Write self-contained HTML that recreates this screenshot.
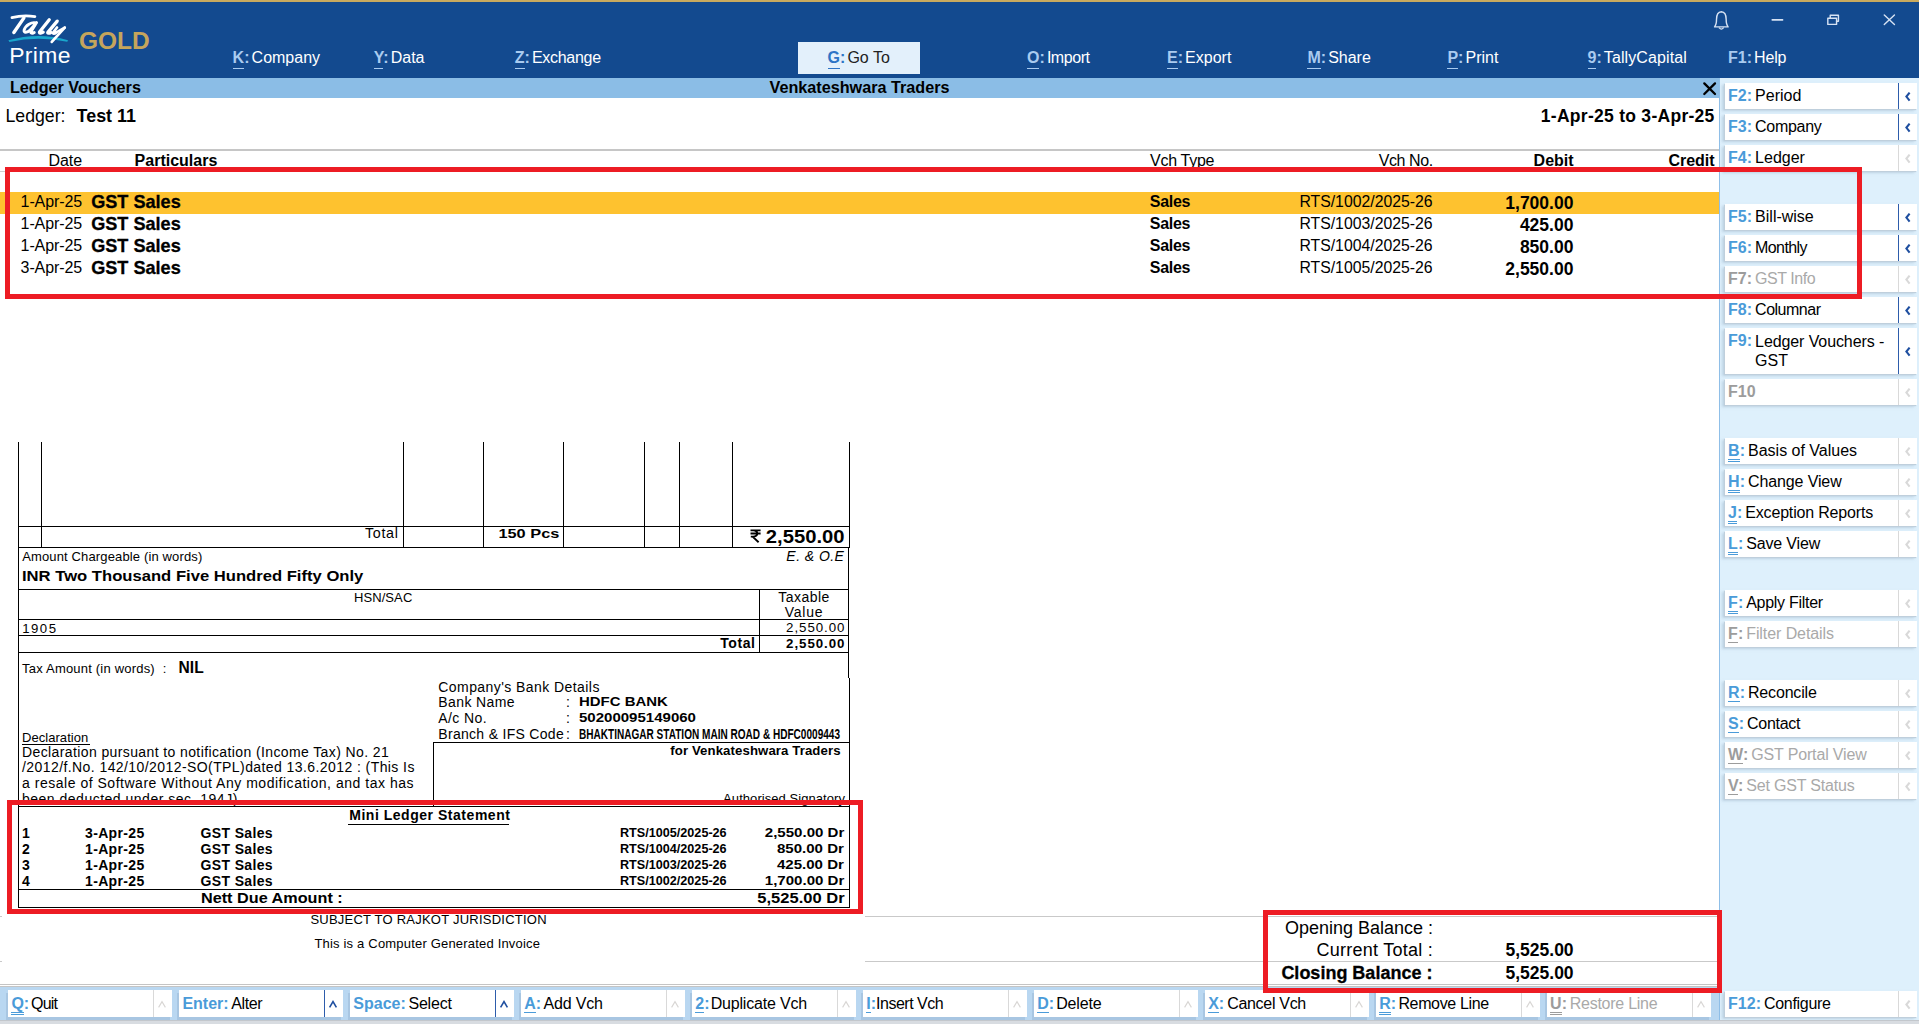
<!DOCTYPE html>
<html><head><meta charset="utf-8"><title>TallyPrime</title>
<style>
*{box-sizing:border-box;margin:0;padding:0}
html,body{width:1919px;height:1024px;overflow:hidden;background:#fff}
body{position:relative;font-family:"Liberation Sans",sans-serif;font-size:16px;color:#000}
.a{position:absolute;white-space:nowrap}
.b{font-weight:bold}
.hdr{left:0;top:0;width:1919px;height:78px;background:#134a8f}
.gold{left:0;top:0;width:1919px;height:2px;background:#c9aa5e}
.mi{color:#fff;font-size:16px;line-height:20px}
.mi .k{color:#a9cbf0;font-weight:bold;border-bottom:1px solid #a9cbf0;padding-bottom:2px}
.mi .c{color:#a9cbf0;font-weight:bold;margin-right:2.1px}
.tb{left:0;top:78px;width:1720px;height:20px;background:#8bbde6}
.side{left:1719px;top:78px;width:200px;height:946px;background:#def0fc;border-left:1px solid #8fbfe8}
.btn{left:1725px;width:192px;height:26px;background:#fff;box-shadow:-1px 1px 1px #bfcfdc,-3px 2px 2.5px rgba(160,186,208,.5);font-size:16px;line-height:24.6px}
.btn .k{position:absolute;left:3.1px;top:1px;color:#4a9bd9;font-weight:bold}
.btn .l{position:absolute;top:1px;color:#000}
.btn .sep{position:absolute;left:173px;top:0;width:1px;height:26px;background:#2d5cab}
.btn .ch{position:absolute;left:178px;top:0;width:10px;height:26px}
.btn.dis .k{color:#9c9c9c}
.btn.dis .l{color:#a9a9a9}
.btn.na .sep{background:#d9d9d9}
.u1{border-bottom:1px solid currentColor;padding-bottom:0}
.u2{border-bottom:3px double currentColor;padding-bottom:0}
.bb{left:0;top:987px;width:1719px;height:33px;background:#b9d7f1}
.bbtn{top:990px;width:164px;height:27px;background:#fff;font-size:16px;line-height:27.4px;box-shadow:-2px 3px 0 #a8c6e2}
.bbtn .k{position:absolute;left:3.4px;top:0;color:#4a9bd9;font-weight:bold}
.bbtn .l{position:absolute;top:0;color:#000;letter-spacing:-0.27px}
.bbtn .sep{position:absolute;left:145.4px;top:0;width:1px;height:27px;background:#d9d9d9}
.bbtn.act .sep{background:#2d5cab}
.bbtn.dis .k{color:#9c9c9c}.bbtn.dis .l{color:#a9a9a9}
.gl{background:#c6c6c6;height:2px}
.red{border:5px solid #ed1c24}
.ln{background:#000}
.inv{font-size:13px}
</style></head><body>

<div class="a hdr"></div><div class="a gold"></div>
<svg class="a" style="left:4px;top:10px" width="80" height="60" viewBox="0 0 1365 1024">
<path d="M75,518 Q580,372 1092,516 L1080,542 Q580,438 92,545 Z" fill="#19a6cc"/>
<g fill="none" stroke="#fff" stroke-linecap="round" stroke-linejoin="round">
<path d="M135,130 C250,100 400,92 528,112" stroke-width="46"/>
<path d="M340,135 L168,385" stroke-width="58"/>
<path d="M552,222 C470,196 366,262 344,340 C330,392 396,396 446,342 C490,296 530,246 556,214 L462,368 C446,396 484,404 516,384" stroke-width="50"/>
<path d="M772,168 L606,376 C596,398 636,402 668,380" stroke-width="56"/>
<path d="M908,190 L748,382 C738,398 768,402 800,384" stroke-width="56"/>
<path d="M905,298 L838,386 C828,408 858,412 896,382 L1036,300" stroke-width="46"/>
<path d="M1036,300 L815,545" stroke-width="46"/>
</g>
</svg>
<div class="a" style="left:9.2px;top:41.77px;font-size:22.9px;line-height:26px;color:#fff;letter-spacing:0.35px">Prime</div>
<div class="a b" style="left:79px;top:27.21px;font-size:24.5px;line-height:28px;color:#c5a55c;">GOLD</div>
<div class="a mi" style="left:232.6px;top:48.06px"><span class="k">K</span><span class="c">:</span>Company</div>
<div class="a mi" style="left:373.8px;top:48.06px"><span class="k">Y</span><span class="c">:</span>Data</div>
<div class="a mi" style="left:514.8px;top:48.06px"><span class="k">Z</span><span class="c">:</span><span style="letter-spacing:-0.3px">Exchange</span></div>
<div class="a" style="left:798px;top:42px;width:122px;height:32px;background:#e3f0fb"></div>
<div class="a mi" style="left:827.5px;top:48.06px;color:#222"><span class="k" style="color:#2e74c6;border-color:#2e74c6">G</span><span class="c" style="color:#2e74c6">:</span>Go To</div>
<div class="a mi" style="left:1027.0px;top:48.06px"><span class="k">O</span><span class="c">:</span><span style="letter-spacing:-0.45px">Import</span></div>
<div class="a mi" style="left:1167.0px;top:48.06px"><span class="k">E</span><span class="c">:</span>Export</div>
<div class="a mi" style="left:1307.4px;top:48.06px"><span class="k">M</span><span class="c">:</span>Share</div>
<div class="a mi" style="left:1447.4px;top:48.06px"><span class="k">P</span><span class="c">:</span>Print</div>
<div class="a mi" style="left:1587.5px;top:48.06px"><span class="k">9</span><span class="c">:</span><span style="letter-spacing:0.1px">TallyCapital</span></div>
<div class="a mi" style="left:1728.0px;top:48.06px"><span class="k" style="border-bottom:none">F1</span><span class="c">:</span><span style="letter-spacing:-0.2px">Help</span></div>
<svg class="a" style="left:1700px;top:4px" width="210" height="32" viewBox="0 0 1919 292" fill="none" stroke="#d6e2f3" stroke-width="13" stroke-linecap="round" stroke-linejoin="round">
<path d="M195,70 C160,72 151,105 151,140 C151,178 146,194 133,209 L257,209 C244,194 239,178 239,140 C239,105 230,72 195,70 Z"/>
<path d="M176,218 Q195,240 214,218" stroke-width="12"/>
<path d="M660,145 L755,145" stroke-width="14"/>
<path d="M1190,128 L1190,102 L1265,102 L1265,158 L1248,158"/>
<rect x="1168" y="130" width="80" height="56"/>
<path d="M1684,100 L1777,188 M1777,100 L1684,188" stroke-width="13"/>
</svg>
<div class="a tb"></div>
<div class="a b" style="left:9.9px;top:76.99px;line-height:20px;font-size:16.2px">Ledger Vouchers</div>
<div class="a b" style="left:0;width:1719px;text-align:center;top:76.99px;line-height:20px;font-size:16.2px">Venkateshwara Traders</div>
<svg class="a" style="left:1702px;top:81px" width="16" height="16" viewBox="0 0 16 16"><path d="M2.3,2.4 L13,13 M13,2.4 L2.3,13" stroke="#000" stroke-width="2.3" stroke-linecap="round" fill="none"/></svg>
<div class="a" style="left:5.5px;top:104.77px;font-size:17.7px;line-height:22px">Ledger:</div>
<div class="a b" style="left:76.6px;top:104.77px;font-size:17.9px;line-height:22px">Test 11</div>
<div class="a b" style="right:204.4px;top:104.84px;font-size:17.5px;letter-spacing:0.28px;line-height:22px">1-Apr-25 to 3-Apr-25</div>
<div class="a gl" style="left:0;top:149px;width:1719px"></div>
<div class="a" style="left:48.4px;top:150.66px;line-height:20px">Date</div>
<div class="a b" style="left:134.6px;top:150.66px;line-height:20px">Particulars</div>
<div class="a" style="left:1150.1px;top:150.66px;line-height:20px;letter-spacing:-0.3px">Vch Type</div>
<div class="a" style="right:486.2px;top:150.66px;line-height:20px;letter-spacing:-0.4px">Vch No.</div>
<div class="a b" style="right:345.4px;top:150.66px;line-height:20px">Debit</div>
<div class="a b" style="right:204.4px;top:150.66px;line-height:20px">Credit</div>
<div class="a" style="left:0;top:171px;width:1719px;height:1px;background:#cfcfcf"></div>
<div class="a" style="left:0;top:192px;width:1719px;height:21.7px;background:#fec22f"></div>
<div class="a" style="left:20.6px;top:191.76px;line-height:20px;letter-spacing:-0.1px">1-Apr-25</div>
<div class="a b" style="left:91.2px;top:191.43px;font-size:18.1px;line-height:22px;-webkit-text-stroke:0.3px #000">GST Sales</div>
<div class="a b" style="left:1149.8px;top:191.76px;line-height:20px;letter-spacing:-0.3px">Sales</div>
<div class="a" style="right:486.4px;top:191.76px;line-height:20px;font-size:15.8px">RTS/1002/2025-26</div>
<div class="a b" style="right:345.6px;top:191.64px;font-size:17.5px;line-height:22px">1,700.00</div>
<div class="a" style="left:20.6px;top:213.76px;line-height:20px;letter-spacing:-0.1px">1-Apr-25</div>
<div class="a b" style="left:91.2px;top:213.43px;font-size:18.1px;line-height:22px;-webkit-text-stroke:0.3px #000">GST Sales</div>
<div class="a b" style="left:1149.8px;top:213.76px;line-height:20px;letter-spacing:-0.3px">Sales</div>
<div class="a" style="right:486.4px;top:213.76px;line-height:20px;font-size:15.8px">RTS/1003/2025-26</div>
<div class="a b" style="right:345.6px;top:213.64px;font-size:17.5px;line-height:22px">425.00</div>
<div class="a" style="left:20.6px;top:235.76px;line-height:20px;letter-spacing:-0.1px">1-Apr-25</div>
<div class="a b" style="left:91.2px;top:235.43px;font-size:18.1px;line-height:22px;-webkit-text-stroke:0.3px #000">GST Sales</div>
<div class="a b" style="left:1149.8px;top:235.76px;line-height:20px;letter-spacing:-0.3px">Sales</div>
<div class="a" style="right:486.4px;top:235.76px;line-height:20px;font-size:15.8px">RTS/1004/2025-26</div>
<div class="a b" style="right:345.6px;top:235.64px;font-size:17.5px;line-height:22px">850.00</div>
<div class="a" style="left:20.6px;top:257.76px;line-height:20px;letter-spacing:-0.1px">3-Apr-25</div>
<div class="a b" style="left:91.2px;top:257.43px;font-size:18.1px;line-height:22px;-webkit-text-stroke:0.3px #000">GST Sales</div>
<div class="a b" style="left:1149.8px;top:257.76px;line-height:20px;letter-spacing:-0.3px">Sales</div>
<div class="a" style="right:486.4px;top:257.76px;line-height:20px;font-size:15.8px">RTS/1005/2025-26</div>
<div class="a b" style="right:345.6px;top:257.64px;font-size:17.5px;line-height:22px">2,550.00</div>
<div class="a" style="left:0;top:916px;width:1719px;height:1px;background:#c9c9c9"></div>
<div class="a" style="left:0;top:961px;width:1719px;height:1px;background:#c9c9c9"></div>
<div class="a" style="left:0;top:984px;width:1719px;height:1px;background:#c4c4c4"></div><div class="a" style="left:0;top:986px;width:1719px;height:1px;background:#c4c4c4"></div>
<div class="a" style="right:486.0px;top:917.06px;font-size:18px;line-height:22px">Opening Balance :</div>
<div class="a" style="right:486.0px;top:938.96px;font-size:18px;line-height:22px;letter-spacing:0.25px">Current Total :</div>
<div class="a b" style="right:486.6px;top:962.16px;font-size:18px;line-height:22px;-webkit-text-stroke:0.3px #000">Closing Balance :</div>
<div class="a b" style="right:345.4px;top:938.94px;font-size:17.5px;line-height:22px">5,525.00</div>
<div class="a b" style="right:345.4px;top:961.94px;font-size:17.5px;line-height:22px">5,525.00</div>
<div class="a" style="left:2px;top:436px;width:863px;height:548px;background:#fff"></div>
<div class="a ln" style="left:18px;top:442px;width:1px;height:105px"></div>
<div class="a ln" style="left:41px;top:442px;width:1px;height:105px"></div>
<div class="a ln" style="left:403px;top:442px;width:1px;height:105px"></div>
<div class="a ln" style="left:483px;top:442px;width:1px;height:105px"></div>
<div class="a ln" style="left:563px;top:442px;width:1px;height:105px"></div>
<div class="a ln" style="left:644px;top:442px;width:1px;height:105px"></div>
<div class="a ln" style="left:679px;top:442px;width:1px;height:105px"></div>
<div class="a ln" style="left:732px;top:442px;width:1px;height:105px"></div>
<div class="a ln" style="left:849px;top:442px;width:1px;height:105px"></div>
<div class="a ln" style="left:18px;top:547px;width:1px;height:361px"></div>
<div class="a ln" style="left:848px;top:547px;width:1px;height:131px"></div>
<div class="a ln" style="left:849px;top:678px;width:1px;height:230px"></div>
<div class="a ln" style="left:18px;top:526px;width:832px;height:1px"></div>
<div class="a ln" style="left:18px;top:547px;width:832px;height:1px"></div>
<div class="a ln" style="left:18px;top:589px;width:831px;height:1px"></div>
<div class="a ln" style="left:18px;top:619px;width:831px;height:1px"></div>
<div class="a ln" style="left:18px;top:635px;width:831px;height:1px"></div>
<div class="a ln" style="left:18px;top:652px;width:831px;height:1px"></div>
<div class="a ln" style="left:759px;top:589px;width:1px;height:63px"></div>
<div class="a ln" style="left:433px;top:742px;width:1px;height:64px"></div>
<div class="a ln" style="left:433px;top:742px;width:416px;height:1px"></div>
<div class="a ln" style="left:18px;top:806px;width:832px;height:1px"></div>
<div class="a ln" style="left:18px;top:889px;width:832px;height:1px"></div>
<div class="a ln" style="left:18px;top:907px;width:832px;height:1px"></div>
<div class="a" style="top:524.35px;font-size:14.3px;line-height:19px;right:1520.4px;letter-spacing:0.7px;">Total</div>
<div class="a" style="top:525.12px;font-size:13.5px;line-height:18px;right:1359.4px;font-weight:bold;transform:scaleX(1.21);transform-origin:right center;">150 Pcs</div>
<svg class="a" style="left:749.6px;top:529px" width="12" height="14" viewBox="0 0 12 14"><path d="M0.5,1.4 H10.6 M0.5,4.5 H10.6 M2.6,1.4 C8.9,0.9 8.9,7.9 2.6,7.6 H0.8 M2.6,7.6 L8.6,13.3" fill="none" stroke="#000" stroke-width="1.9"/></svg>
<div class="a" style="top:525.02px;font-size:18.4px;line-height:24px;right:1074.0px;font-weight:bold;transform:scaleX(1.1);transform-origin:right center;">2,550.00</div>
<div class="a" style="top:547.80px;font-size:13px;line-height:17px;left:22.2px;letter-spacing:0.14px;">Amount Chargeable (in words)</div>
<div class="a" style="top:546.75px;font-size:14px;line-height:18px;right:1074.6px;font-style:italic;letter-spacing:0.45px;">E. &amp; O.E</div>
<div class="a" style="top:567.01px;font-size:14.4px;line-height:19px;left:21.8px;font-weight:bold;transform:scaleX(1.155);transform-origin:left center;">INR Two Thousand Five Hundred Fifty Only</div>
<div class="a" style="top:588.80px;font-size:13px;line-height:17px;left:353.9px;letter-spacing:0.1px;">HSN/SAC</div>
<div class="a" style="top:587.55px;font-size:14px;line-height:18px;left:759.0px;letter-spacing:0.45px;width:90px;text-align:center;">Taxable</div>
<div class="a" style="top:602.75px;font-size:14px;line-height:18px;left:759.0px;letter-spacing:0.75px;width:90px;text-align:center;">Value</div>
<div class="a" style="top:619.53px;font-size:13.2px;line-height:17px;left:22.2px;letter-spacing:1.5px;">1905</div>
<div class="a" style="top:619.49px;font-size:13.3px;line-height:17px;right:1073.6px;letter-spacing:0.95px;">2,550.00</div>
<div class="a" style="top:634.05px;font-size:14px;line-height:18px;right:1163.4px;font-weight:bold;letter-spacing:0.6px;">Total</div>
<div class="a" style="top:634.79px;font-size:13.3px;line-height:17px;right:1073.6px;font-weight:bold;letter-spacing:0.95px;">2,550.00</div>
<div class="a" style="top:660.00px;font-size:13px;line-height:17px;left:22.1px;letter-spacing:0.2px;">Tax Amount (in words)</div>
<div class="a" style="top:660.00px;font-size:13px;line-height:17px;left:162.8px;">:</div>
<div class="a" style="top:657.79px;font-size:15.6px;line-height:20px;left:178.6px;font-weight:bold;">NIL</div>
<div class="a" style="top:677.95px;font-size:14px;line-height:18px;left:438.3px;letter-spacing:0.43px;">Company's Bank Details</div>
<div class="a" style="top:692.85px;font-size:14px;line-height:18px;left:438.3px;letter-spacing:0.4px;">Bank Name</div>
<div class="a" style="top:692.85px;font-size:14px;line-height:18px;left:566.0px;">:</div>
<div class="a" style="top:692.99px;font-size:13.6px;line-height:18px;left:578.6px;font-weight:bold;transform:scaleX(1.1);transform-origin:left center;">HDFC BANK</div>
<div class="a" style="top:708.95px;font-size:14px;line-height:18px;left:438.3px;letter-spacing:0.4px;">A/c No.</div>
<div class="a" style="top:708.95px;font-size:14px;line-height:18px;left:566.0px;">:</div>
<div class="a" style="top:709.09px;font-size:13.6px;line-height:18px;left:578.6px;font-weight:bold;transform:scaleX(1.105);transform-origin:left center;">50200095149060</div>
<div class="a" style="top:725.05px;font-size:14px;line-height:18px;left:438.3px;letter-spacing:0.3px;">Branch &amp; IFS Code</div>
<div class="a" style="top:725.05px;font-size:14px;line-height:18px;left:566.0px;">:</div>
<div class="a" style="top:725.05px;font-size:14px;line-height:18px;left:578.6px;font-weight:bold;transform:scaleX(0.718);transform-origin:left center;">BHAKTINAGAR STATION MAIN ROAD &amp; HDFC0009443</div>
<div class="a" style="top:741.53px;font-size:13.2px;line-height:17px;right:1078.4px;font-weight:bold;letter-spacing:0.1px;">for Venkateshwara Traders</div>
<div class="a" style="top:790.30px;font-size:13px;line-height:17px;right:1074.0px;letter-spacing:0.06px;">Authorised Signatory</div>
<div class="a" style="top:728.50px;font-size:13px;line-height:17px;left:22.0px;letter-spacing:0.05px;">Declaration</div>
<div class="a ln" style="left:22px;top:744px;width:67.5px;height:1px"></div>
<div class="a" style="top:742.75px;font-size:14px;line-height:18px;left:22.0px;letter-spacing:0.39px;">Declaration pursuant to notification (Income Tax) No. 21</div>
<div class="a" style="top:758.40px;font-size:14px;line-height:18px;left:22.0px;letter-spacing:0.42px;">/2012/f.No. 142/10/2012-SO(TPL)dated 13.6.2012 : (This Is</div>
<div class="a" style="top:774.05px;font-size:14px;line-height:18px;left:22.0px;letter-spacing:0.52px;">a resale of Software Without Any modification, and tax has</div>
<div class="a" style="top:789.70px;font-size:14px;line-height:18px;left:22.0px;letter-spacing:0.5px;">been deducted under sec. 194J)</div>
<div class="a" style="top:806.15px;font-size:14px;line-height:18px;left:349.2px;font-weight:bold;letter-spacing:0.53px;">Mini Ledger Statement</div>
<div class="a ln" style="left:348px;top:824px;width:160.8px;height:1px"></div>
<div class="a" style="top:823.85px;font-size:14px;line-height:18px;left:22.0px;font-weight:bold;">1</div>
<div class="a" style="top:823.85px;font-size:14px;line-height:18px;left:85.0px;font-weight:bold;letter-spacing:0.35px;">3-Apr-25</div>
<div class="a" style="top:823.85px;font-size:14px;line-height:18px;left:200.6px;font-weight:bold;letter-spacing:0.35px;">GST Sales</div>
<div class="a" style="top:823.95px;font-size:13.7px;line-height:18px;left:620.0px;font-weight:bold;transform:scaleX(0.922);transform-origin:left center;">RTS/1005/2025-26</div>
<div class="a" style="top:823.95px;font-size:13.7px;line-height:18px;right:1074.8px;font-weight:bold;transform:scaleX(1.1);transform-origin:right center;">2,550.00 Dr</div>
<div class="a" style="top:839.85px;font-size:14px;line-height:18px;left:22.0px;font-weight:bold;">2</div>
<div class="a" style="top:839.85px;font-size:14px;line-height:18px;left:85.0px;font-weight:bold;letter-spacing:0.35px;">1-Apr-25</div>
<div class="a" style="top:839.85px;font-size:14px;line-height:18px;left:200.6px;font-weight:bold;letter-spacing:0.35px;">GST Sales</div>
<div class="a" style="top:839.95px;font-size:13.7px;line-height:18px;left:620.0px;font-weight:bold;transform:scaleX(0.922);transform-origin:left center;">RTS/1004/2025-26</div>
<div class="a" style="top:839.95px;font-size:13.7px;line-height:18px;right:1074.8px;font-weight:bold;transform:scaleX(1.1);transform-origin:right center;">850.00 Dr</div>
<div class="a" style="top:855.85px;font-size:14px;line-height:18px;left:22.0px;font-weight:bold;">3</div>
<div class="a" style="top:855.85px;font-size:14px;line-height:18px;left:85.0px;font-weight:bold;letter-spacing:0.35px;">1-Apr-25</div>
<div class="a" style="top:855.85px;font-size:14px;line-height:18px;left:200.6px;font-weight:bold;letter-spacing:0.35px;">GST Sales</div>
<div class="a" style="top:855.95px;font-size:13.7px;line-height:18px;left:620.0px;font-weight:bold;transform:scaleX(0.922);transform-origin:left center;">RTS/1003/2025-26</div>
<div class="a" style="top:855.95px;font-size:13.7px;line-height:18px;right:1074.8px;font-weight:bold;transform:scaleX(1.1);transform-origin:right center;">425.00 Dr</div>
<div class="a" style="top:871.85px;font-size:14px;line-height:18px;left:22.0px;font-weight:bold;">4</div>
<div class="a" style="top:871.85px;font-size:14px;line-height:18px;left:85.0px;font-weight:bold;letter-spacing:0.35px;">1-Apr-25</div>
<div class="a" style="top:871.85px;font-size:14px;line-height:18px;left:200.6px;font-weight:bold;letter-spacing:0.35px;">GST Sales</div>
<div class="a" style="top:871.95px;font-size:13.7px;line-height:18px;left:620.0px;font-weight:bold;transform:scaleX(0.922);transform-origin:left center;">RTS/1002/2025-26</div>
<div class="a" style="top:871.95px;font-size:13.7px;line-height:18px;right:1074.8px;font-weight:bold;transform:scaleX(1.1);transform-origin:right center;">1,700.00 Dr</div>
<div class="a" style="top:888.68px;font-size:14.5px;line-height:19px;left:201.4px;font-weight:bold;transform:scaleX(1.118);transform-origin:left center;">Nett Due Amount :</div>
<div class="a" style="top:888.88px;font-size:14.5px;line-height:19px;right:1074.0px;font-weight:bold;transform:scaleX(1.14);transform-origin:right center;">5,525.00 Dr</div>
<div class="a" style="top:910.50px;font-size:13px;line-height:17px;left:310.4px;letter-spacing:0.23px;">SUBJECT TO RAJKOT JURISDICTION</div>
<div class="a" style="top:934.50px;font-size:13px;line-height:17px;left:314.4px;letter-spacing:0.19px;">This is a Computer Generated Invoice</div>
<div class="a side"></div>
<div class="a btn" style="top:83px;height:26px"><span class="k">F2:</span><span class="l" style="left:30.1px;">Period</span><span class="sep" style="height:26px"></span><svg class="ch" style="top:0px" viewBox="0 0 10 26"><path d="M6.6,9.6 L3.4,13.6 L6.6,17.6" fill="none" stroke="#1f4fa0" stroke-width="2.1" stroke-linecap="butt"/></svg></div>
<div class="a btn" style="top:114px;height:26px"><span class="k">F3:</span><span class="l" style="left:30.1px;"><span style="letter-spacing:-0.3px">Company</span></span><span class="sep" style="height:26px"></span><svg class="ch" style="top:0px" viewBox="0 0 10 26"><path d="M6.6,9.6 L3.4,13.6 L6.6,17.6" fill="none" stroke="#1f4fa0" stroke-width="2.1" stroke-linecap="butt"/></svg></div>
<div class="a btn na" style="top:145px;height:26px"><span class="k">F4:</span><span class="l" style="left:30.1px;">Ledger</span><span class="sep" style="height:26px"></span><svg class="ch" style="top:0px" viewBox="0 0 10 26"><path d="M6.6,9.6 L3.4,13.6 L6.6,17.6" fill="none" stroke="#d9d9d9" stroke-width="2.1" stroke-linecap="butt"/></svg></div>
<div class="a btn" style="top:204px;height:26px"><span class="k">F5:</span><span class="l" style="left:30.1px;">Bill-wise</span><span class="sep" style="height:26px"></span><svg class="ch" style="top:0px" viewBox="0 0 10 26"><path d="M6.6,9.6 L3.4,13.6 L6.6,17.6" fill="none" stroke="#1f4fa0" stroke-width="2.1" stroke-linecap="butt"/></svg></div>
<div class="a btn" style="top:235px;height:26px"><span class="k">F6:</span><span class="l" style="left:30.1px;"><span style="letter-spacing:-0.6px">Monthly</span></span><span class="sep" style="height:26px"></span><svg class="ch" style="top:0px" viewBox="0 0 10 26"><path d="M6.6,9.6 L3.4,13.6 L6.6,17.6" fill="none" stroke="#1f4fa0" stroke-width="2.1" stroke-linecap="butt"/></svg></div>
<div class="a btn dis na" style="top:266px;height:26px"><span class="k">F7:</span><span class="l" style="left:30.1px;"><span style="letter-spacing:-0.45px">GST Info</span></span><span class="sep" style="height:26px"></span><svg class="ch" style="top:0px" viewBox="0 0 10 26"><path d="M6.6,9.6 L3.4,13.6 L6.6,17.6" fill="none" stroke="#d9d9d9" stroke-width="2.1" stroke-linecap="butt"/></svg></div>
<div class="a btn" style="top:297px;height:26px"><span class="k">F8:</span><span class="l" style="left:30.1px;"><span style="letter-spacing:-0.5px">Columnar</span></span><span class="sep" style="height:26px"></span><svg class="ch" style="top:0px" viewBox="0 0 10 26"><path d="M6.6,9.6 L3.4,13.6 L6.6,17.6" fill="none" stroke="#1f4fa0" stroke-width="2.1" stroke-linecap="butt"/></svg></div>
<div class="a btn" style="top:328px;height:46px"><span class="k">F9:</span><span class="l" style="left:30.1px;line-height:19px;padding-top:3px;"><span style="letter-spacing:-0.1px">Ledger Vouchers -</span><br>GST</span><span class="sep" style="height:46px"></span><svg class="ch" style="top:10px" viewBox="0 0 10 26"><path d="M6.6,9.6 L3.4,13.6 L6.6,17.6" fill="none" stroke="#1f4fa0" stroke-width="2.1" stroke-linecap="butt"/></svg></div>
<div class="a btn dis na" style="top:379px;height:26px"><span class="k">F10</span><span class="l" style="left:33.7px;"></span><span class="sep" style="height:26px"></span><svg class="ch" style="top:0px" viewBox="0 0 10 26"><path d="M6.6,9.6 L3.4,13.6 L6.6,17.6" fill="none" stroke="#d9d9d9" stroke-width="2.1" stroke-linecap="butt"/></svg></div>
<div class="a btn na" style="top:438px;height:26px"><span class="k"><span class="u2">B</span>:</span><span class="l" style="left:23.0px;">Basis of Values</span><span class="sep" style="height:26px"></span><svg class="ch" style="top:0px" viewBox="0 0 10 26"><path d="M6.6,9.6 L3.4,13.6 L6.6,17.6" fill="none" stroke="#d9d9d9" stroke-width="2.1" stroke-linecap="butt"/></svg></div>
<div class="a btn na" style="top:469px;height:26px"><span class="k"><span class="u2">H</span>:</span><span class="l" style="left:23.0px;"><span style="letter-spacing:-0.12px">Change View</span></span><span class="sep" style="height:26px"></span><svg class="ch" style="top:0px" viewBox="0 0 10 26"><path d="M6.6,9.6 L3.4,13.6 L6.6,17.6" fill="none" stroke="#d9d9d9" stroke-width="2.1" stroke-linecap="butt"/></svg></div>
<div class="a btn na" style="top:500px;height:26px"><span class="k"><span class="u2">J</span>:</span><span class="l" style="left:20.3px;"><span style="letter-spacing:-0.18px">Exception Reports</span></span><span class="sep" style="height:26px"></span><svg class="ch" style="top:0px" viewBox="0 0 10 26"><path d="M6.6,9.6 L3.4,13.6 L6.6,17.6" fill="none" stroke="#d9d9d9" stroke-width="2.1" stroke-linecap="butt"/></svg></div>
<div class="a btn na" style="top:531px;height:26px"><span class="k"><span class="u2">L</span>:</span><span class="l" style="left:21.2px;"><span style="letter-spacing:-0.15px">Save View</span></span><span class="sep" style="height:26px"></span><svg class="ch" style="top:0px" viewBox="0 0 10 26"><path d="M6.6,9.6 L3.4,13.6 L6.6,17.6" fill="none" stroke="#d9d9d9" stroke-width="2.1" stroke-linecap="butt"/></svg></div>
<div class="a btn na" style="top:590px;height:26px"><span class="k"><span class="u2">F</span>:</span><span class="l" style="left:21.2px;"><span style="letter-spacing:-0.28px">Apply Filter</span></span><span class="sep" style="height:26px"></span><svg class="ch" style="top:0px" viewBox="0 0 10 26"><path d="M6.6,9.6 L3.4,13.6 L6.6,17.6" fill="none" stroke="#d9d9d9" stroke-width="2.1" stroke-linecap="butt"/></svg></div>
<div class="a btn dis na" style="top:621px;height:26px"><span class="k"><span class="u1">F</span>:</span><span class="l" style="left:21.2px;"><span style="letter-spacing:-0.08px">Filter Details</span></span><span class="sep" style="height:26px"></span><svg class="ch" style="top:0px" viewBox="0 0 10 26"><path d="M6.6,9.6 L3.4,13.6 L6.6,17.6" fill="none" stroke="#d9d9d9" stroke-width="2.1" stroke-linecap="butt"/></svg></div>
<div class="a btn na" style="top:680px;height:26px"><span class="k"><span class="u1">R</span>:</span><span class="l" style="left:23.0px;"><span style="letter-spacing:-0.18px">Reconcile</span></span><span class="sep" style="height:26px"></span><svg class="ch" style="top:0px" viewBox="0 0 10 26"><path d="M6.6,9.6 L3.4,13.6 L6.6,17.6" fill="none" stroke="#d9d9d9" stroke-width="2.1" stroke-linecap="butt"/></svg></div>
<div class="a btn na" style="top:711px;height:26px"><span class="k"><span class="u1">S</span>:</span><span class="l" style="left:22.1px;"><span style="letter-spacing:-0.3px">Contact</span></span><span class="sep" style="height:26px"></span><svg class="ch" style="top:0px" viewBox="0 0 10 26"><path d="M6.6,9.6 L3.4,13.6 L6.6,17.6" fill="none" stroke="#d9d9d9" stroke-width="2.1" stroke-linecap="butt"/></svg></div>
<div class="a btn dis na" style="top:742px;height:26px"><span class="k"><span class="u1">W</span>:</span><span class="l" style="left:26.2px;"><span style="letter-spacing:-0.15px">GST Portal View</span></span><span class="sep" style="height:26px"></span><svg class="ch" style="top:0px" viewBox="0 0 10 26"><path d="M6.6,9.6 L3.4,13.6 L6.6,17.6" fill="none" stroke="#d9d9d9" stroke-width="2.1" stroke-linecap="butt"/></svg></div>
<div class="a btn dis na" style="top:773px;height:26px"><span class="k"><span class="u1">V</span>:</span><span class="l" style="left:21.2px;"><span style="letter-spacing:-0.18px">Set GST Status</span></span><span class="sep" style="height:26px"></span><svg class="ch" style="top:0px" viewBox="0 0 10 26"><path d="M6.6,9.6 L3.4,13.6 L6.6,17.6" fill="none" stroke="#d9d9d9" stroke-width="2.1" stroke-linecap="butt"/></svg></div>
<div class="a btn na" style="top:991px;height:26px"><span class="k">F12:</span><span class="l" style="left:39.0px;"><span style="letter-spacing:-0.3px">Configure</span></span><span class="sep" style="height:26px"></span><svg class="ch" style="top:0px" viewBox="0 0 10 26"><path d="M6.6,9.6 L3.4,13.6 L6.6,17.6" fill="none" stroke="#d9d9d9" stroke-width="2.1" stroke-linecap="butt"/></svg></div>
<div class="a bb"></div>
<div class="a" style="left:0;top:1020px;width:1919px;height:4px;background:#d8dce1;border-top:1px solid #c3c7cc"></div>
<div class="a bbtn" style="left:8.0px"><span class="k"><span class="u2">Q</span>:</span><span class="l" style="left:23.0px;letter-spacing:-0.77px">Quit</span><span class="sep"></span><svg style="position:absolute;left:148.4px;top:0.6px" width="12" height="27" viewBox="0 0 12 27"><path d="M2.6,16.4 L6,10.6 L9.4,16.4" fill="none" stroke="#d8d6d4" stroke-width="1.1"/></svg></div>
<div class="a bbtn act" style="left:179.0px"><span class="k">Enter:</span><span class="l" style="left:52.3px;letter-spacing:-0.43px">Alter</span><span class="sep"></span><svg style="position:absolute;left:148.4px;top:0.6px" width="12" height="27" viewBox="0 0 12 27"><path d="M2.6,16.4 L6,10.6 L9.4,16.4" fill="none" stroke="#1f4fa0" stroke-width="1.6"/></svg></div>
<div class="a bbtn act" style="left:349.9px"><span class="k">Space:</span><span class="l" style="left:58.6px;letter-spacing:-0.22px">Select</span><span class="sep"></span><svg style="position:absolute;left:148.4px;top:0.6px" width="12" height="27" viewBox="0 0 12 27"><path d="M2.6,16.4 L6,10.6 L9.4,16.4" fill="none" stroke="#1f4fa0" stroke-width="1.6"/></svg></div>
<div class="a bbtn" style="left:520.9px"><span class="k"><span class="u1">A</span>:</span><span class="l" style="left:22.6px;letter-spacing:-0.18px">Add Vch</span><span class="sep"></span><svg style="position:absolute;left:148.4px;top:0.6px" width="12" height="27" viewBox="0 0 12 27"><path d="M2.6,16.4 L6,10.6 L9.4,16.4" fill="none" stroke="#d8d6d4" stroke-width="1.1"/></svg></div>
<div class="a bbtn" style="left:691.9px"><span class="k"><span class="u1">2</span>:</span><span class="l" style="left:18.8px;letter-spacing:-0.18px">Duplicate Vch</span><span class="sep"></span><svg style="position:absolute;left:148.4px;top:0.6px" width="12" height="27" viewBox="0 0 12 27"><path d="M2.6,16.4 L6,10.6 L9.4,16.4" fill="none" stroke="#d8d6d4" stroke-width="1.1"/></svg></div>
<div class="a bbtn" style="left:862.9px"><span class="k"><span class="u1">I</span>:</span><span class="l" style="left:13.2px;letter-spacing:-0.5px">Insert Vch</span><span class="sep"></span><svg style="position:absolute;left:148.4px;top:0.6px" width="12" height="27" viewBox="0 0 12 27"><path d="M2.6,16.4 L6,10.6 L9.4,16.4" fill="none" stroke="#d8d6d4" stroke-width="1.1"/></svg></div>
<div class="a bbtn" style="left:1033.8px"><span class="k"><span class="u1">D</span>:</span><span class="l" style="left:22.4px;letter-spacing:-0.16px">Delete</span><span class="sep"></span><svg style="position:absolute;left:148.4px;top:0.6px" width="12" height="27" viewBox="0 0 12 27"><path d="M2.6,16.4 L6,10.6 L9.4,16.4" fill="none" stroke="#d8d6d4" stroke-width="1.1"/></svg></div>
<div class="a bbtn" style="left:1204.8px"><span class="k"><span class="u1">X</span>:</span><span class="l" style="left:22.4px;letter-spacing:-0.31px">Cancel Vch</span><span class="sep"></span><svg style="position:absolute;left:148.4px;top:0.6px" width="12" height="27" viewBox="0 0 12 27"><path d="M2.6,16.4 L6,10.6 L9.4,16.4" fill="none" stroke="#d8d6d4" stroke-width="1.1"/></svg></div>
<div class="a bbtn" style="left:1375.8px"><span class="k"><span class="u2">R</span>:</span><span class="l" style="left:22.6px;letter-spacing:-0.35px">Remove Line</span><span class="sep"></span><svg style="position:absolute;left:148.4px;top:0.6px" width="12" height="27" viewBox="0 0 12 27"><path d="M2.6,16.4 L6,10.6 L9.4,16.4" fill="none" stroke="#d8d6d4" stroke-width="1.1"/></svg></div>
<div class="a bbtn dis" style="left:1546.7px"><span class="k"><span class="u2">U</span>:</span><span class="l" style="left:23.0px;letter-spacing:-0.25px">Restore Line</span><span class="sep"></span><svg style="position:absolute;left:148.4px;top:0.6px" width="12" height="27" viewBox="0 0 12 27"><path d="M2.6,16.4 L6,10.6 L9.4,16.4" fill="none" stroke="#d8d6d4" stroke-width="1.1"/></svg></div>
<div class="a red" style="left:5px;top:167px;width:1857px;height:132px"></div>
<div class="a red" style="left:7px;top:800px;width:856px;height:114px"></div>
<div class="a red" style="left:1263px;top:910px;width:459px;height:82.5px"></div>
</body></html>
